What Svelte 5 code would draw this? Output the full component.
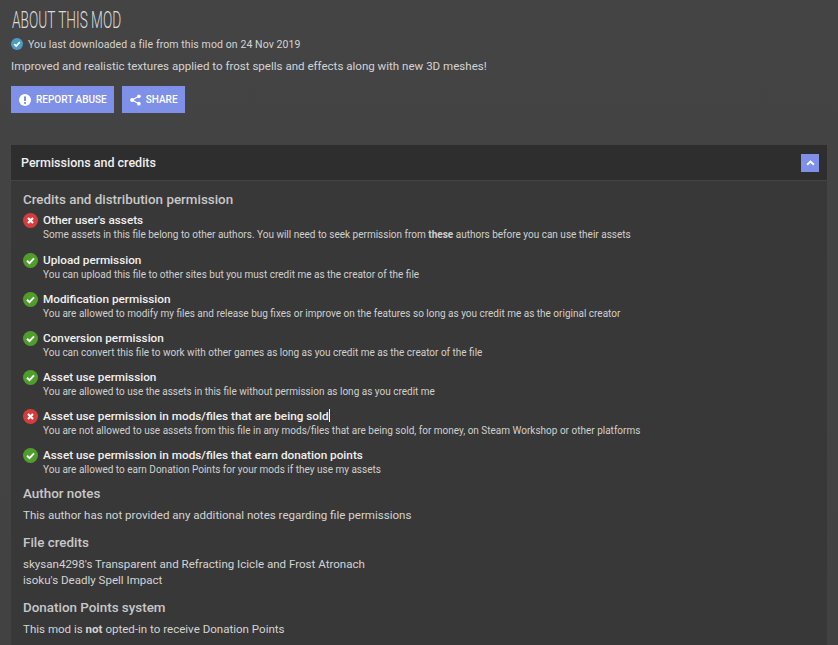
<script>
    const perms = [
        { ok: false, title: "Other user's assets", desc: ["Some assets in this file belong to other authors. You will need to seek permission from ", "these", " authors before you can use their assets"] },
        { ok: true, title: "Upload permission", desc: ["You can upload this file to other sites but you must credit me as the creator of the file"] },
        { ok: true, title: "Modification permission", desc: ["You are allowed to modify my files and release bug fixes or improve on the features so long as you credit me as the original creator"] },
        { ok: true, title: "Conversion permission", desc: ["You can convert this file to work with other games as long as you credit me as the creator of the file"] },
        { ok: true, title: "Asset use permission", desc: ["You are allowed to use the assets in this file without permission as long as you credit me"] },
        { ok: false, title: "Asset use permission in mods/files that are being sold", caret: true, desc: ["You are not allowed to use assets from this file in any mods/files that are being sold, for money, on Steam Workshop or other platforms"] },
        { ok: true, title: "Asset use permission in mods/files that earn donation points", desc: ["You are allowed to earn Donation Points for your mods if they use my assets"] }
    ];
</script>

<div class="page">
    <h2 class="title"><span>ABOUT THIS MOD</span></h2>

    <div class="downloaded">
        <svg class="tick" viewBox="0 0 12 12" width="12" height="12">
            <circle cx="6" cy="6" r="6" fill="#4a9cc4" />
            <path d="M3.2 6.2 5.2 8 8.8 4.2" fill="none" stroke="#fff" stroke-width="1.7" />
        </svg>
        You last downloaded a file from this mod on 24 Nov 2019
    </div>

    <p class="summary">Improved and realistic textures applied to frost spells and effects along with new 3D meshes!</p>

    <div class="actions">
        <button class="btn report">
            <svg viewBox="0 0 12 12" width="12" height="12">
                <circle cx="6" cy="6" r="6" fill="#fff" />
                <rect x="5" y="2.4" width="2" height="4.6" fill="#7f90e8" />
                <rect x="5" y="8" width="2" height="1.8" fill="#7f90e8" />
            </svg>
            REPORT ABUSE
        </button>
        <button class="btn share">
            <svg viewBox="0 0 12 12" width="11" height="12">
                <path d="M9.5 2 2.5 6 9.5 10" fill="none" stroke="#fff" stroke-width="1.3" />
                <circle cx="9.7" cy="2" r="2" fill="#fff" />
                <circle cx="2.3" cy="6" r="2.2" fill="#fff" />
                <circle cx="9.7" cy="10" r="2" fill="#fff" />
            </svg>
            SHARE
        </button>
    </div>

    <section class="panel">
        <header class="panel-head">
            <h3>Permissions and credits</h3>
            <button class="toggle" aria-label="Collapse">
                <svg viewBox="0 0 10 7" width="9" height="6">
                    <path d="M1 5.5 5 1.8 9 5.5" fill="none" stroke="#fff" stroke-width="2.2" />
                </svg>
            </button>
        </header>

        <div class="panel-body">
            <h4 class="first">Credits and distribution permission</h4>
            <ul class="perms">
                {#each perms as p}
                    <li>
                        <span class="icon" class:ok={p.ok}>
                            <svg viewBox="0 0 15 15" width="15" height="15">
                                {#if p.ok}
                                    <path d="M4 7.8 6.5 10.2 11 5.4" fill="none" stroke="#fff" stroke-width="2" />
                                {:else}
                                    <path d="M5 5 10 10M10 5 5 10" fill="none" stroke="#fff" stroke-width="2.2" />
                                {/if}
                            </svg>
                        </span>
                        <div>
                            <div class="perm-title">{p.title}{#if p.caret}<i class="caret"></i>{/if}</div>
                            <div class="perm-desc">{p.desc[0]}{#if p.desc[1]}<b>{p.desc[1]}</b>{p.desc[2]}{/if}</div>
                        </div>
                    </li>
                {/each}
            </ul>

            <h4>Author notes</h4>
            <p>This author has not provided any additional notes regarding file permissions</p>

            <h4>File credits</h4>
            <p>skysan4298's Transparent and Refracting Icicle and Frost Atronach<br />isoku's Deadly Spell Impact</p>

            <h4>Donation Points system</h4>
            <p>This mod is <b>not</b> opted-in to receive Donation Points</p>
        </div>
    </section>
</div>

<style>
    :global(body) {
        background: #434343;
        overflow: hidden;
    }

    .page {
        height: 645px;
        overflow: hidden;
        padding: 0 11px;
        box-sizing: border-box;
        font-family: Roboto, "Liberation Sans", sans-serif;
        color: #d4d4d4;
        background: linear-gradient(#444444, #424242);
    }

    .title {
        margin: 0;
        padding-top: 8px;
        height: 28px;
        box-sizing: border-box;
        margin-bottom: 8px;
        font-size: 24px;
        line-height: 24px;
        font-weight: 300;
        color: #dcdcdc;
    }

    .title span {
        display: inline-block;
        transform: scaleX(0.57);
        transform-origin: left center;
        white-space: nowrap;
        margin-left: 1px;
    }

    .downloaded {
        display: flex;
        align-items: center;
        gap: 5px;
        height: 16px;
        font-size: 10.5px;
        letter-spacing: 0.1px;
    }

    .summary {
        margin: 6px 0 0;
        font-size: 11.55px;
        line-height: 16px;
    }

    .actions {
        display: flex;
        gap: 8px;
        margin-top: 12px;
    }

    .btn {
        display: flex;
        align-items: center;
        gap: 5px;
        height: 27px;
        padding: 0 7px 0 8px;
        border: 0;
        background: #7f90e8;
        color: #fff;
        font: 500 10px Roboto, sans-serif;
    }

    .panel {
        margin-top: 32px;
        background: #383838;
    }

    .panel-head {
        display: flex;
        align-items: center;
        justify-content: space-between;
        height: 36px;
        padding: 0 8px 0 10px;
        background: #2e2e2e;
        border-bottom: 1px solid #444;
        box-sizing: border-box;
    }

    .panel-head h3 {
        margin: 0;
        font-size: 12.5px;
        font-weight: 500;
        color: #f0f0f0;
    }

    .toggle {
        display: flex;
        align-items: center;
        justify-content: center;
        width: 18px;
        height: 18px;
        padding: 0;
        border: 0;
        background: #7f90e8;
    }

    .panel-body {
        padding: 11px 12px 20px;
    }

    h4 {
        margin: 12px 0 0;
        font-size: 13.4px;
        line-height: 16px;
        font-weight: 500;
        color: #c8c8c8;
    }

    h4.first {
        margin-top: 0;
    }

    .panel-body p {
        margin: 5px 0 0;
        font-size: 11.55px;
        line-height: 16px;
    }

    .perms {
        list-style: none;
        margin: 5px 0 0;
        padding: 0;
    }

    .perms li {
        display: flex;
        gap: 5px;
        height: 39px;
    }

    .perms li:first-child {
        height: 40px;
    }

    .perms li:last-child {
        height: 26px;
    }

    .icon {
        flex: none;
        width: 15px;
        height: 15px;
        border-radius: 50%;
        background: #d63c3c;
    }

    .icon.ok {
        background: #4f9e2c;
    }

    .icon svg {
        display: block;
    }

    .perm-title {
        font-size: 11.75px;
        line-height: 14px;
        font-weight: 500;
        color: #f0f0f0;
    }

    .caret {
        display: inline-block;
        width: 1px;
        height: 13px;
        background: #fff;
        vertical-align: -2px;
    }

    .perm-desc {
        padding-top: 1px;
        font-size: 10px;
        line-height: 13px;
        color: #d0d0d0;
        white-space: nowrap;
    }
</style>
